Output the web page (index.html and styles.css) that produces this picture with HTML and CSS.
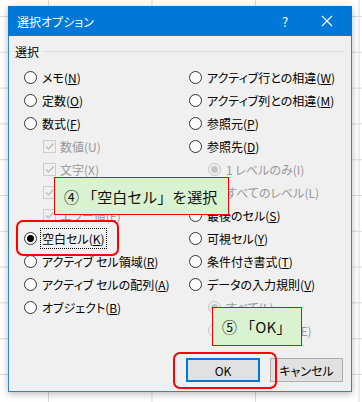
FILE: index.html
```html
<!DOCTYPE html>
<html lang="ja">
<head>
    <meta charset="UTF-8">
    <title>選択オプション</title>
    <link rel="stylesheet" href="styles.css">
</head>
<body>

<div class="sheet">
    <div class="dialog">
        <div class="titlebar">
            <span class="title">選択オプション</span>
            <span class="help">?</span>
            <span class="close">
                <svg width="12" height="12" viewBox="0 0 12 12"><path d="M1 1L11 11M11 1L1 11" stroke="#fff" stroke-width="1.2" fill="none"/></svg>
            </span>
        </div>

        <div class="content">
            <div class="group-head">
                <span>選択</span>
                <span class="rule"></span>
            </div>

            <div class="cols">
                <div class="col left">
                    <div class="row"><span class="radio"></span><span class="label">メモ(<u>N</u>)</span></div>
                    <div class="row"><span class="radio"></span><span class="label">定数(<u>O</u>)</span></div>
                    <div class="row"><span class="radio"></span><span class="label">数式(<u>F</u>)</span></div>
                    <div class="row sub off"><span class="check"><svg width="11" height="11" viewBox="0 0 11 11"><path d="M2 5.5L4.5 8L9.5 2.5" stroke="#b8b8b8" stroke-width="1.2" fill="none"/></svg></span><span class="label">数値(U)</span></div>
                    <div class="row sub off"><span class="check"><svg width="11" height="11" viewBox="0 0 11 11"><path d="M2 5.5L4.5 8L9.5 2.5" stroke="#b8b8b8" stroke-width="1.2" fill="none"/></svg></span><span class="label">文字(X)</span></div>
                    <div class="row sub off"><span class="check"><svg width="11" height="11" viewBox="0 0 11 11"><path d="M2 5.5L4.5 8L9.5 2.5" stroke="#b8b8b8" stroke-width="1.2" fill="none"/></svg></span><span class="label">論理値(G)</span></div>
                    <div class="row sub off"><span class="check"><svg width="11" height="11" viewBox="0 0 11 11"><path d="M2 5.5L4.5 8L9.5 2.5" stroke="#b8b8b8" stroke-width="1.2" fill="none"/></svg></span><span class="label">エラー値(E)</span></div>
                    <div class="row"><span class="radio on"></span><span class="label focus">空白セル(<u>K</u>)</span></div>
                    <div class="row"><span class="radio"></span><span class="label">アクティブ セル領域(<u>R</u>)</span></div>
                    <div class="row"><span class="radio"></span><span class="label">アクティブ セルの配列(<u>A</u>)</span></div>
                    <div class="row"><span class="radio"></span><span class="label">オブジェクト(<u>B</u>)</span></div>
                </div>

                <div class="col right">
                    <div class="row"><span class="radio"></span><span class="label">アクティブ行との相違(<u>W</u>)</span></div>
                    <div class="row"><span class="radio"></span><span class="label">アクティブ列との相違(<u>M</u>)</span></div>
                    <div class="row"><span class="radio"></span><span class="label">参照元(<u>P</u>)</span></div>
                    <div class="row"><span class="radio"></span><span class="label">参照先(<u>D</u>)</span></div>
                    <div class="row sub off"><span class="radio on"></span><span class="label">1 レベルのみ(I)</span></div>
                    <div class="row sub off"><span class="radio"></span><span class="label">すべてのレベル(L)</span></div>
                    <div class="row"><span class="radio"></span><span class="label">最後のセル(<u>S</u>)</span></div>
                    <div class="row"><span class="radio"></span><span class="label">可視セル(<u>Y</u>)</span></div>
                    <div class="row"><span class="radio"></span><span class="label">条件付き書式(<u>T</u>)</span></div>
                    <div class="row"><span class="radio"></span><span class="label">データの入力規則(<u>V</u>)</span></div>
                    <div class="row sub off"><span class="radio on"></span><span class="label">すべて(L)</span></div>
                    <div class="row sub off"><span class="radio"></span><span class="label">同じ入力規則(E)</span></div>
                </div>
            </div>

            <div class="buttons">
                <button class="btn default">OK</button>
                <button class="btn">キャンセル</button>
            </div>
        </div>
    </div>

    <div class="callout step4">④ 「空白セル」を選択</div>
    <div class="callout step5">⑤ 「OK」</div>
    <div class="mark mark-blank"></div>
    <div class="mark mark-ok"></div>
</div>

</body>
</html>
```

FILE: styles.css
```css
body {
    margin: 0;
    font-family: "Noto Sans CJK JP", "Noto Sans", sans-serif;
    font-feature-settings: "palt";
    color: #000;
}
.sheet {
    position: relative;
    width: 362px;
    height: 402px;
    padding: 6px 0 0 8px;
    box-sizing: border-box;
    background-color: #fff;
    background-image:
        linear-gradient(to bottom, #dadada 1px, transparent 1px),
        linear-gradient(to right, #dadada 1px, transparent 1px);
    background-size: 100% 35.8px, 103.5px 100%;
    background-position: 0 16px, 48px 0;
    overflow: hidden;
}
.dialog {
    width: 344px;
    box-sizing: border-box;
    border: 1px solid #2b86d6;
    background: #f0f0f0;
    box-shadow: 0 2px 7px rgba(0, 0, 0, 0.28);
}
.titlebar {
    display: flex;
    align-items: center;
    height: 30px;
    margin: -1px -1px 0;
    background: #0078d7;
    color: #fff;
    font-size: 12px;
}
.title {
    padding-left: 9px;
    flex: 1;
}
.help {
    width: 20px;
    text-align: center;
    font-size: 13px;
    margin-right: 26px;
}
.close {
    display: flex;
    width: 12px;
    margin-right: 19px;
}
.content {
    padding: 7px 8px 9px 6px;
}
.group-head {
    display: flex;
    align-items: center;
    height: 16px;
    font-size: 12px;
}
.rule {
    flex: 1;
    height: 1px;
    margin-left: 5px;
    margin-right: -2px;
    background: #dcdcdc;
}
.cols {
    display: grid;
    grid-template-columns: 180px 1fr;
    margin-top: 7px;
    margin-left: -6px;
}
.col.left {
    padding-left: 15px;
}
.row {
    display: flex;
    align-items: center;
    height: 23px;
    font-size: 12px;
    white-space: nowrap;
}
.row.sub {
    padding-left: 19px;
}
.row.off {
    color: #999;
}
.radio {
    width: 13px;
    height: 13px;
    box-sizing: border-box;
    border: 1px solid #333;
    border-radius: 50%;
    background: #fff;
    margin-right: 5px;
    display: flex;
    align-items: center;
    justify-content: center;
    flex: none;
}
.radio.on::after {
    content: "";
    width: 7px;
    height: 7px;
    border-radius: 50%;
    background: #000;
}
.off .radio {
    border-color: #c4c4c4;
    background: #f0f0f0;
}
.off .radio.on::after {
    background: #c4c4c4;
}
.check {
    width: 13px;
    height: 13px;
    box-sizing: border-box;
    border: 1px solid #cdcdcd;
    margin-right: 4px;
    display: flex;
    align-items: center;
    justify-content: center;
    flex: none;
}
.label u {
    text-underline-offset: 1px;
}
.label.focus {
    outline: 1px dotted #000;
    outline-offset: 1px;
}
.buttons {
    display: flex;
    justify-content: flex-end;
    gap: 10px;
    margin-top: 16px;
}
.btn {
    width: 73px;
    height: 24px;
    font-family: inherit;
    font-feature-settings: "palt";
    font-size: 12px;
    color: #000;
    background: #e1e1e1;
    border: 1px solid #adadad;
    padding: 0;
}
.btn.default {
    width: 74px;
    border: 2px solid #0078d7;
}
.callout {
    position: absolute;
    box-sizing: border-box;
    display: flex;
    align-items: center;
    background: #d9f2d0;
    border: 1px solid #f00;
    font-size: 15px;
    font-feature-settings: normal;
    color: #111;
    white-space: nowrap;
}
.step4 {
    left: 54px;
    top: 177px;
    width: 175px;
    height: 38px;
    padding-left: 9px;
}
.step5 {
    left: 212px;
    top: 307px;
    width: 90px;
    height: 39px;
    padding-left: 9px;
}
.mark {
    position: absolute;
    box-sizing: border-box;
    border: 2px solid #f00;
    border-radius: 7px;
}
.mark-blank {
    left: 16px;
    top: 220px;
    width: 103px;
    height: 36px;
}
.mark-ok {
    left: 173px;
    top: 352px;
    width: 104px;
    height: 37px;
}
```
